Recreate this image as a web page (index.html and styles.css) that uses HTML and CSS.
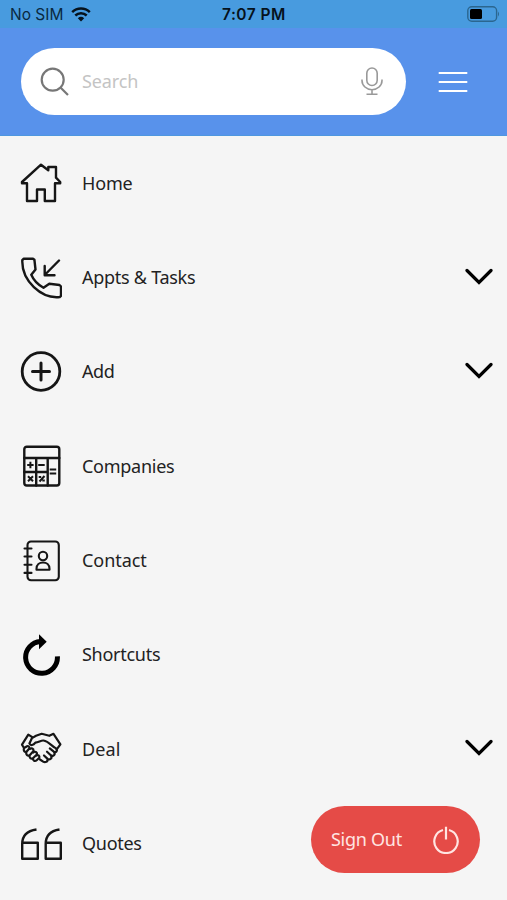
FILE: index.html
```html
<!DOCTYPE html>
<html lang="en">
<head>
<meta charset="utf-8">
<title>Menu</title>
<link rel="stylesheet" href="styles.css">
</head>
<body>
<div class="status">
  <span class="carrier">No SIM</span>
  <svg class="wifi" width="20" height="15" viewBox="0 0 20 15" fill="none" stroke="#06121c" stroke-width="2.5"><path d="M1.2 5.2a12.6 12.6 0 0 1 17.6 0M4.3 8.5a8.2 8.2 0 0 1 11.4 0"/><path d="M10 14.4 6.8 11.2a4.7 4.7 0 0 1 6.4 0Z" fill="#06121c" stroke="none"/></svg>
  <span class="time">7:07 PM</span>
  <svg class="battery" width="34" height="17" viewBox="0 0 34 17"><rect x=".8" y=".8" width="28.8" height="14.4" rx="4" fill="none" stroke="#2b668f" stroke-width="1.4"/><rect x="3" y="3" width="12" height="10" rx="1.5"/><path d="M31 5.5q2 2.5 0 5Z" fill="#2b668f"/></svg>
</div>
<header class="header">
  <div class="search">
    <svg width="30" height="30" viewBox="0 0 30 30" fill="none" stroke="#777" stroke-width="2.2"><circle cx="12.7" cy="12.7" r="11"/><path d="m20.500 20.500 7.500 7.500"/></svg>
    <span class="placeholder">Search</span>
    <svg class="mic" width="22" height="29" viewBox="0 0 22 29" fill="none" stroke="#999" stroke-width="1.6"><rect x="5.8" y="1" width="10.4" height="17.5" rx="5.2"/><path d="M1 12.5v1a10 9.2 0 0 0 20 0v-1M11 22.7v4.6M5.5 27.3h11"/></svg>
  </div>
  <svg class="burger" width="30" height="22" viewBox="0 0 30 22" stroke="#fff" stroke-width="1.8"><path d="M.7 2h28.600M.7 11h28.600M.7 20h28.600"/></svg>
</header>
<nav class="menu">
  <div class="row">
    <svg class="icon" viewBox="0 0 42 42"><path d="M21 2.7 2 20v1.200h5V39h10V27.500h7.800V39H35V21.200h5.200V20L36 15.700V5h-7.700v3.300Z"/></svg>
    <span class="label home">Home</span>
  </div>
  <div class="row">
    <svg class="icon" viewBox="0 0 42 42"><path d="M3.800 1.700H13l1.400 1 1.100 9.800-4.200 5.300q3.500 8.200 12.200 13l5.800-4 10.200 1.200 1.500 1.500v9.300l-1.300 1.200C21.500 42 1.500 24 2.300 3.200ZM39 3.500 24.700 18M24.700 9v9.200h9.800"/></svg>
    <span class="label">Appts &amp; Tasks</span>
    <svg class="chevron" viewBox="0 0 28 18"><path d="m2 2.500 12 12 12-12"/></svg>
  </div>
  <div class="row">
    <svg class="icon" viewBox="0 0 42 42"><circle cx="21" cy="20.500" r="18.800" stroke-width="2.800"/><path d="M21 12v17M12.500 20.500h17" stroke-width="3"/></svg>
    <span class="label add">Add</span>
    <svg class="chevron" viewBox="0 0 28 18"><path d="m2 2.500 12 12 12-12"/></svg>
  </div>
  <div class="row">
    <svg class="icon" viewBox="0 0 42 42"><rect x="4.300" y="1.700" width="35" height="38.800" rx="2.500"/><path d="M4.300 13h35M4.300 27h23.400M16.200 13v27.500M27.700 13v27.500"/><path stroke-width="2" stroke-linecap="butt" d="M7.200 20h6.400M10.400 16.800v6.400M18.200 20h6.500M29.700 24.500h6.500M29.700 28.500h6.500M8 31.200l5 5M13 31.200l-5 5M24.500 31l-5 5.500M18.700 32h2.500M22.300 35.500h2.500"/></svg>
    <span class="label">Companies</span>
  </div>
  <div class="row">
    <svg class="icon" viewBox="0 0 42 42"><g stroke-width="2.100"><rect x="7.500" y="1.500" width="31.300" height="38.800" rx="3.500"/><path d="M4.500 8.500h7M4.500 16.500h7M4.500 24.700h7M4.500 32.900h7"/><circle cx="23" cy="16" r="4.200"/><path d="M16.500 29.800h13v-1c0-4.200-3-6.300-6.500-6.300s-6.500 2.100-6.500 6.300Z"/></g></svg>
    <span class="label contact">Contact</span>
  </div>
  <div class="row">
    <svg class="icon" viewBox="0 0 42 42"><path d="M37.400 22.300A15.900 15.900 0 1 1 20.500 7.500" stroke-width="5" stroke="#000" stroke-linecap="butt"/><path d="M19 .3v15l7.700-7.500Z" fill="#000" stroke="none"/></svg>
    <span class="label">Shortcuts</span>
  </div>
  <div class="row">
    <svg class="icon" viewBox="0 0 42 42"><g stroke-width="2.200"><path d="m4 20-2-3.300L8.300 6.600l4 2.600M16 7.800l5.700-2 7.600 2 4.200-2 6.900 10.600-3.500 4.800M16 7.800l-4 2.300-2.600 5.300c1 2.500 4 2 6-.7 3.500-.7 6-2.500 8-2.200 5.500 1 8.200 5.500 12.200 7.600 2.800 2.600.3 5-1.800 3.600l-4-3.300M33.800 23.700c2.300 3.200-.8 5-3 3.500L27 23.700M30.800 27.200c2 3.300-1 5-3.200 3.700L24 27.500M27.600 30.900c.5 3-2.500 4-4.500 2.700L20 31.500"/><path d="M4 20c-.8 2.500.5 4.500 2.500 3.700l3-3.500c0-2-2-2.700-3.200-1.500ZM6.500 23.700c-1 3 1 4.500 3.200 3.500l3.800-4.300c.3-2.600-2.200-3.200-3.500-2M9.700 27.200c-.8 2.800 1.300 4.200 3.300 3l3.800-3.700c.7-2.500-2-3.500-3.500-2M13 30.200c-.5 2.600 2 3.500 3.700 2l2.600-2.500c.6-2.300-1.500-3.200-2.600-2.200"/></g></svg>
    <span class="label deal">Deal</span>
    <svg class="chevron" viewBox="0 0 28 18"><path d="m2 2.500 12 12 12-12"/></svg>
  </div>
  <div class="row">
    <svg class="icon square" viewBox="0 0 42 42"><path d="M16.500 6.500Q2.200 8.500 2.200 21V35.800h15.600V19.700H2.500M39.500 6.500Q25.700 8.500 25.700 21V35.800h15.100V19.700H26"/></svg>
    <span class="label">Quotes</span>
  </div>
</nav>
<div class="signout">
  <span class="label">Sign Out</span>
  <svg width="26" height="28" viewBox="0 0 26 28" fill="none" stroke="#ffe5e2" stroke-width="2.200"><path d="M10 4a11.700 11.700 0 1 0 6 0M13 .8v12.700"/></svg>
</div>
</body>
</html>
```
FILE: styles.css
```css
* { box-sizing: border-box; }
body {
  margin: 0;
  width: 507px;
  height: 900px;
  overflow: hidden;
  background: #f5f5f5;
  font-family: "Noto Sans", sans-serif;
  color: #222;
}
svg { display: block; flex: none; }
.status {
  height: 28px;
  display: grid;
  grid-template-columns: 61px 151px 1fr auto;
  align-items: center;
  padding: 1px 6px 0 10px;
  background: #489bdf;
  font-family: Inter, sans-serif;
  font-size: 15.5px;
  white-space: nowrap;
  color: #0a2940;
}
.time { font-weight: 600; color: #06121c; letter-spacing: 0.5px; }
.header {
  height: 108px;
  display: flex;
  align-items: center;
  padding: 0 39px 0 21px;
  background: #5892eb;
  border-bottom: 1px solid #4e97df;
}
.search {
  width: 385px;
  height: 67px;
  border-radius: 34px;
  background: #fff;
  display: flex;
  align-items: center;
  padding: 0 23px 0 19px;
}
.placeholder {
  margin-left: 12px;
  padding-bottom: 2px;
  font-size: 18px;
  letter-spacing: -0.1px;
  color: #c4c4c4;
}
.mic { margin-left: auto; }
.burger { margin-left: auto; }
.row {
  height: 94.35px;
  display: flex;
  align-items: center;
  padding: 0 14px 0 20px;
  font-size: 18px;
}
.label { padding-bottom: 1px; letter-spacing: -0.27px; }
.home { letter-spacing: -0.15px; }
.add { letter-spacing: -0.45px; }
.contact { letter-spacing: -0.05px; }
.deal { letter-spacing: 0.1px; }
.icon {
  width: 42px;
  height: 42px;
  margin-right: 20px;
  fill: none;
  stroke: #161616;
  stroke-width: 2.4;
  stroke-linejoin: round;
  stroke-linecap: round;
}
.square { stroke-linecap: butt; }
.chevron {
  width: 28px;
  height: 18px;
  margin: 0 0 2px auto;
  fill: none;
  stroke: #000;
  stroke-width: 3.2;
  stroke-linecap: round;
}
.signout {
  position: absolute;
  left: 311px;
  top: 806px;
  width: 169px;
  height: 67px;
  border-radius: 34px;
  display: flex;
  align-items: center;
  justify-content: space-between;
  padding: 0 21px 0 20px;
  background: #e54b47;
  color: #ffe5e2;
  font-size: 18px;
}
```
